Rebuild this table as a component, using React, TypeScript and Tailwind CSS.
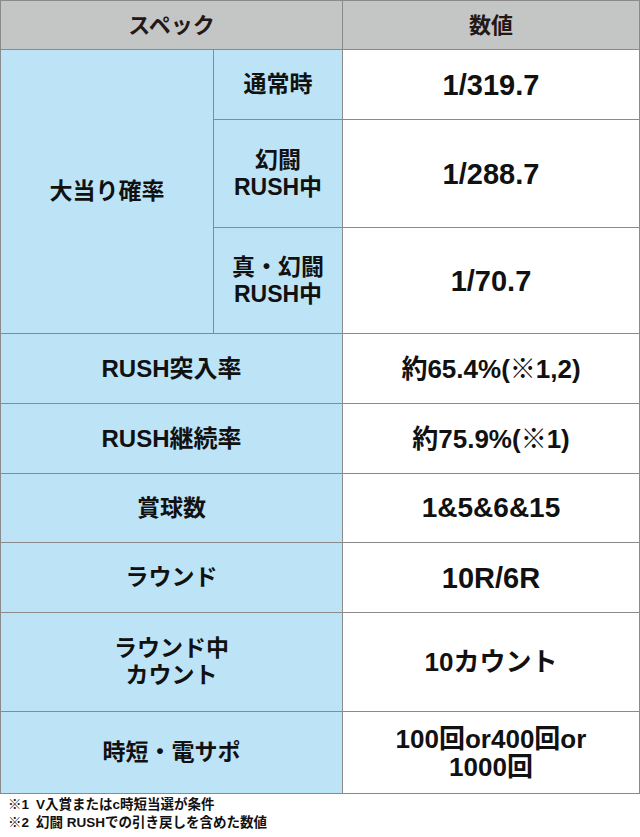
import React from "react";

const font = { fontFamily: '"Liberation Sans", "Noto Sans CJK JP", sans-serif' };

function Label({ children, className = "" }: { children: React.ReactNode; className?: string }) {
  return (
    <div className={`bg-[#bde3f7] flex items-center justify-center text-center font-bold text-[23px] leading-[27px] text-[#111] ${className}`}>
      <div>{children}</div>
    </div>
  );
}

function Value({ children, className = "" }: { children: React.ReactNode; className?: string }) {
  return (
    <div className={`bg-white flex items-center justify-center text-center font-bold leading-[28px] text-[#111] ${className}`}>
      <div>{children}</div>
    </div>
  );
}

export default function App() {
  return (
    <div className="w-[640px] bg-white" style={font}>
      <div className="grid grid-cols-[212px_128px_1fr] grid-rows-[48px_69px_107px_105px_69px_69px_68px_69px_98px_81px] gap-px p-px bg-[#8a8a8a]">
        <div className="col-span-2 bg-[#c4c5c5] flex items-center justify-center font-bold text-[22px] text-[#231815]">スペック</div>
        <div className="bg-[#c4c5c5] flex items-center justify-center font-bold text-[22px] text-[#231815]">数値</div>

        <Label className="row-span-3">大当り確率</Label>
        <Label>通常時</Label>
        <Value className="text-[29px]">1/319.7</Value>
        <Label>幻闘<br />RUSH中</Label>
        <Value className="text-[29px]">1/288.7</Value>
        <Label>真・幻闘<br />RUSH中</Label>
        <Value className="text-[29px]">1/70.7</Value>

        <Label className="col-span-2 text-[24px]">RUSH突入率</Label>
        <Value className="text-[26px]">約65.4%(※1,2)</Value>
        <Label className="col-span-2 text-[24px]">RUSH継続率</Label>
        <Value className="text-[26px]">約75.9%(※1)</Value>
        <Label className="col-span-2">賞球数</Label>
        <Value className="text-[28px]">1&amp;5&amp;6&amp;15</Value>
        <Label className="col-span-2">ラウンド</Label>
        <Value className="text-[29px]">10R/6R</Value>
        <Label className="col-span-2">ラウンド中<br />カウント</Label>
        <Value className="text-[26px]">10カウント</Value>
        <Label className="col-span-2">時短・電サポ</Label>
        <Value className="text-[26px]">100回or400回or<br />1000回</Value>
      </div>
      <div className="pl-2 pt-[2px] text-[13.5px] leading-[18px] font-bold text-[#111]">
        <div>※1<span className="ml-[7px]">V入賞またはc時短当選が条件</span></div>
        <div>※2<span className="ml-[7px]">幻闘 RUSHでの引き戻しを含めた数値</span></div>
      </div>
    </div>
  );
}
